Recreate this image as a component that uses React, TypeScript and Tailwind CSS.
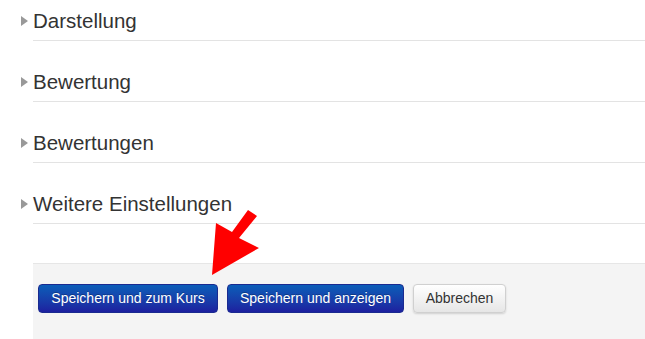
import React from "react";

const sections = ["Darstellung", "Bewertung", "Bewertungen", "Weitere Einstellungen"];

const Section: React.FC<{ title: string }> = ({ title }) => (
  <div className="ml-[33px] border-b border-[#e3e3e3] pb-[7px]">
    <div className="-ml-[15px] flex items-center h-[24px]">
      <span className="w-[15px] flex items-center">
        <span className="block w-0 h-0 border-y-[5px] border-y-transparent border-l-[7px] border-l-[#999999] ml-[3px]" />
      </span>
      <span className="text-[20.5px] leading-[24px] text-[#333333]">{title}</span>
    </div>
  </div>
);

const App: React.FC = () => {
  return (
    <div
      className="relative w-[645px] h-[339px] bg-white overflow-hidden"
      style={{ fontFamily: '"Liberation Sans", Arial, sans-serif' }}
    >
      <div className="pt-[9px] flex flex-col gap-[29px]">
        {sections.map((s) => (
          <Section key={s} title={s} />
        ))}
      </div>
      <div className="ml-[33px] mt-[39px] h-[76px] bg-[#f4f4f4] border-t border-[#e6e6e6] pt-[20px] pl-[5px] flex items-start gap-[9px]">
        <button
          type="button"
          className="h-[29px] w-[180px] rounded-[4px] text-[14px] text-white bg-gradient-to-b from-[#0a5db8] to-[#1d1f9f] border border-[#1a2a90] [text-shadow:0_-1px_0_rgba(0,0,0,0.25)]"
        >
          Speichern und zum Kurs
        </button>
        <button
          type="button"
          className="h-[29px] w-[177px] rounded-[4px] text-[14px] text-white bg-gradient-to-b from-[#0a5db8] to-[#1d1f9f] border border-[#1a2a90] [text-shadow:0_-1px_0_rgba(0,0,0,0.25)]"
        >
          Speichern und anzeigen
        </button>
        <button
          type="button"
          className="h-[29px] w-[93px] rounded-[4px] text-[14px] text-[#333333] bg-gradient-to-b from-white to-[#e6e6e6] border border-[#d0d0d0] shadow-[0_1px_2px_rgba(0,0,0,0.15)]"
        >
          Abbrechen
        </button>
      </div>
      {/* red arrow annotation */}
      <svg
        className="absolute left-0 top-0 pointer-events-none"
        width="645"
        height="339"
        viewBox="0 0 645 339"
      >
        <polygon
          points="248,210 257,216 239,238 259,248 212,275 216,223 232,232"
          fill="#ff0000"
        />
      </svg>
    </div>
  );
};

export default App;
